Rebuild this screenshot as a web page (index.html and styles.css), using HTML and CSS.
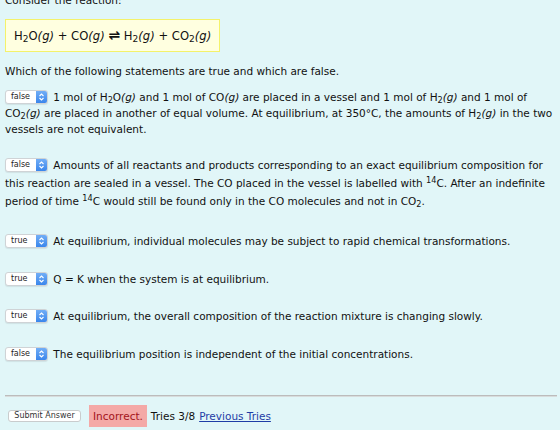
FILE: index.html
```html
<!DOCTYPE html>
<html>
<head>
  <meta charset="UTF-8">
  <title>Equilibrium statements</title>
  <link rel="stylesheet" href="styles.css">
</head>
<body>
<div class="page">
  <p class="intro">Consider the reaction:</p>
  <div class="reaction">H<sub>2</sub>O<i>(g)</i> + CO<i>(g)</i> <span class="eq">&#8652;</span> H<sub>2</sub><i>(g)</i> + CO<sub>2</sub><i>(g)</i></div>
  <p class="prompt">Which of the following statements are true and which are false.</p>

  <div class="stmt first">
    <span class="pick"><span class="val">false</span><span class="knob"><svg width="7" height="10" viewBox="0 0 7 10"><path d="M1.5 4 L3.5 2 L5.5 4 M1.5 6 L3.5 8 L5.5 6" fill="none" stroke="#fff" stroke-width="1.1"/></svg></span></span>
    1 mol of H<sub>2</sub>O<i>(g)</i> and 1 mol of CO<i>(g)</i> are placed in a vessel and 1 mol of H<sub>2</sub><i>(g)</i> and 1 mol of CO<sub>2</sub><i>(g)</i> are placed in another of equal volume. At equilibrium, at 350&deg;C, the amounts of H<sub>2</sub><i>(g)</i> in the two vessels are not equivalent.
  </div>

  <div class="stmt tall">
    <span class="pick"><span class="val">false</span><span class="knob"><svg width="7" height="10" viewBox="0 0 7 10"><path d="M1.5 4 L3.5 2 L5.5 4 M1.5 6 L3.5 8 L5.5 6" fill="none" stroke="#fff" stroke-width="1.1"/></svg></span></span>
    Amounts of all reactants and products corresponding to an exact equilibrium composition for this reaction are sealed in a vessel. The CO placed in the vessel is labelled with <sup>14</sup>C. After an indefinite period of time <sup>14</sup>C would still be found only in the CO molecules and not in CO<sub>2</sub>.
  </div>

  <div class="stmt after-tall">
    <span class="pick"><span class="val">true</span><span class="knob"><svg width="7" height="10" viewBox="0 0 7 10"><path d="M1.5 4 L3.5 2 L5.5 4 M1.5 6 L3.5 8 L5.5 6" fill="none" stroke="#fff" stroke-width="1.1"/></svg></span></span>
    At equilibrium, individual molecules may be subject to rapid chemical transformations.
  </div>

  <div class="stmt">
    <span class="pick"><span class="val">true</span><span class="knob"><svg width="7" height="10" viewBox="0 0 7 10"><path d="M1.5 4 L3.5 2 L5.5 4 M1.5 6 L3.5 8 L5.5 6" fill="none" stroke="#fff" stroke-width="1.1"/></svg></span></span>
    Q = K when the system is at equilibrium.
  </div>

  <div class="stmt">
    <span class="pick"><span class="val">true</span><span class="knob"><svg width="7" height="10" viewBox="0 0 7 10"><path d="M1.5 4 L3.5 2 L5.5 4 M1.5 6 L3.5 8 L5.5 6" fill="none" stroke="#fff" stroke-width="1.1"/></svg></span></span>
    At equilibrium, the overall composition of the reaction mixture is changing slowly.
  </div>

  <div class="stmt">
    <span class="pick"><span class="val">false</span><span class="knob"><svg width="7" height="10" viewBox="0 0 7 10"><path d="M1.5 4 L3.5 2 L5.5 4 M1.5 6 L3.5 8 L5.5 6" fill="none" stroke="#fff" stroke-width="1.1"/></svg></span></span>
    The equilibrium position is independent of the initial concentrations.
  </div>

  <hr class="rule">

  <div class="actions">
    <button class="submit" type="button">Submit Answer</button>
    <span class="verdict">Incorrect.</span>
    <span class="tries">Tries 3/8</span>
    <a class="prev" href="#">Previous Tries</a>
  </div>
</div>
</body>
</html>
```

FILE: styles.css
```css
html, body {
  margin: 0; padding: 0;
  background: #e1f6f8;
}
.page {
  width: 552px;
  padding-left: 5px;
  font-family: "DejaVu Sans", Verdana, sans-serif;
  font-size: 10.5px;
  line-height: 16px;
  color: #111;
}
p { margin: 0; }
sub, sup { font-size: 78%; line-height: 0; }
sub { vertical-align: -2px; }
sup { vertical-align: 4px; }

.intro { margin-top: -8px; }

/* reaction box */
.reaction {
  display: inline-block;
  margin-top: 11px;
  padding: 8px 8px 7px;
  border: 1px solid #f4f26a;
  background: #ffffe0;
  font-size: 11.6px;
}
.reaction .eq { font-size: 14px; font-weight: bold; line-height: 0; }

.prompt { margin-top: 11px; }

/* statements with true/false picker */
.stmt { margin-top: 21.5px; }
.stmt.first { margin-top: 10px; }
.stmt.tall { line-height: 18px; margin-top: 19px; }
.stmt.after-tall { margin-top: 23px; }

.pick {
  display: inline-flex;
  vertical-align: top;
  margin-top: 1px;
  height: 14px;
  width: 43px;
  box-sizing: border-box;
  border: 1px solid #cfd3d6;
  border-radius: 3px;
  background: #fff;
  box-shadow: 0 1px 1px rgba(0,0,0,0.08);
  overflow: hidden;
  margin-right: 2px;
}
.stmt.tall .pick { margin-top: 2px; }
.pick .val {
  flex: 1;
  font-size: 8px;
  line-height: 12px;
  padding-left: 5px;
  color: #222;
}
.pick .knob {
  width: 11px;
  display: flex;
  align-items: center;
  justify-content: center;
  background: linear-gradient(#72aef6, #3a86ec);
}

.rule {
  margin: 33px 0 0;
  height: 0;
  border: none;
  border-top: 1px solid #bcbcbc;
  border-bottom: 1px solid #d8dcdc;
}

/* submit row */
.actions {
  display: flex;
  align-items: center;
  margin-top: 8px;
}
.submit {
  margin-left: 3px;
  height: 12px;
  width: 73px;
  padding: 0;
  border: 1px solid #c9cccd;
  border-radius: 3px;
  background: #fff;
  font-family: "DejaVu Sans", Verdana, sans-serif;
  font-size: 8px;
  line-height: 10px;
  color: #333;
}
.verdict {
  margin-left: 8px;
  height: 22px;
  line-height: 22px;
  padding: 0 4px;
  background: #f4a9a7;
  color: #a3141b;
}
.tries { margin-left: 4px; }
.prev {
  margin-left: 4px;
  color: #1f3da6;
}
```
